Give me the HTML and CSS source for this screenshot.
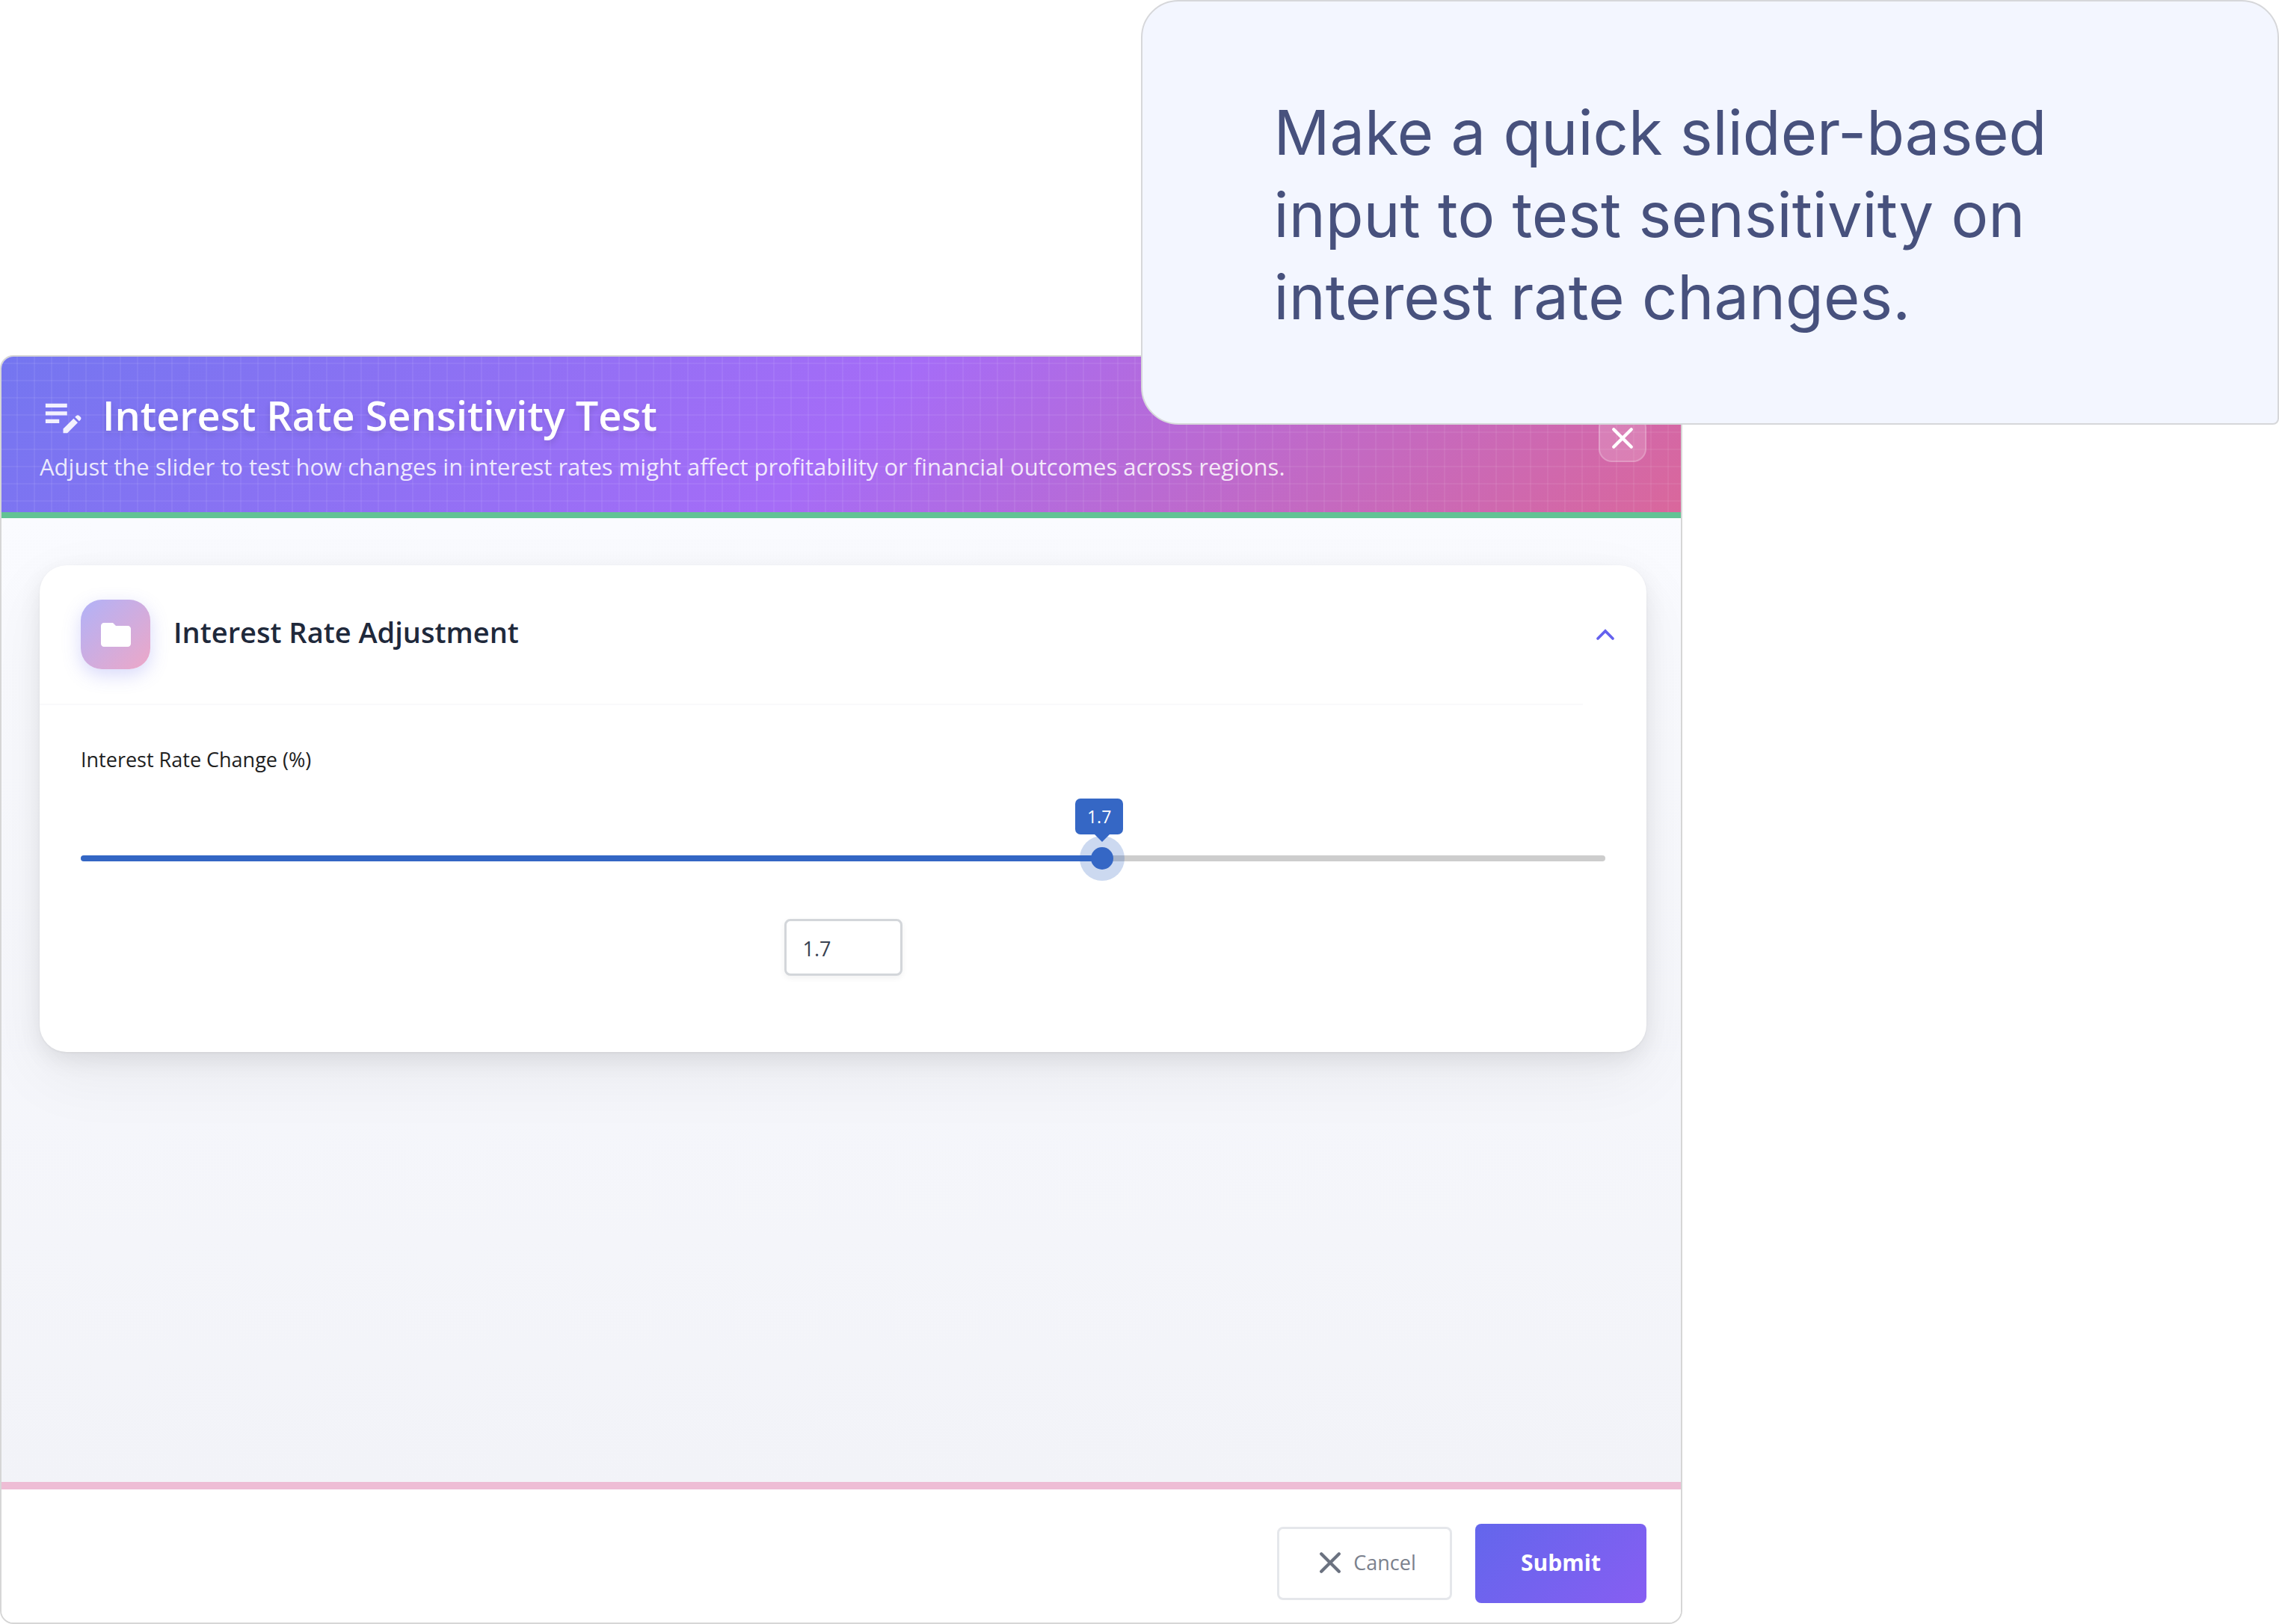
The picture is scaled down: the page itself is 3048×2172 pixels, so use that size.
FILE: index.html
```
<!DOCTYPE html>
<html lang="en">
<head>
    <meta charset="UTF-8">
    <meta name="viewport" content="width=device-width, initial-scale=1.0">
    <title>Interest Rate Sensitivity Test</title>
    <link rel="stylesheet" href="styles.css">
</head>
<body>

<aside class="prompt">
    <p>Make a quick slider-based<br>input to test sensitivity on<br>interest rate changes.</p>
</aside>

<form class="dialog">
    <header class="dialog-header">
        <div class="heading">
            <div class="title-row">
                <svg class="title-icon" viewBox="0 0 24 24" aria-hidden="true"><path d="M3 10h11v2H3v-2zm0-2h11V6H3v2zm0 8h7v-2H3v2zm15.01-3.13.71-.71c.39-.39 1.02-.39 1.41 0l.71.71c.39.39.39 1.02 0 1.41l-.71.71-2.12-2.12zm-.71.71-5.3 5.3V21h2.12l5.3-5.3-2.12-2.12z"/></svg>
                <h1>Interest Rate Sensitivity Test</h1>
            </div>
            <p class="subtitle">Adjust the slider to test how changes in interest rates might affect profitability or financial outcomes across regions.</p>
        </div>
        <button type="button" class="close-button" aria-label="Close">
            <svg viewBox="0 0 28 28"><path d="M3 3l22 22M25 3L3 25"/></svg>
        </button>
    </header>

    <main class="dialog-body">
        <section class="card">
            <div class="card-header">
                <div class="card-icon">
                    <svg viewBox="0 0 24 24" aria-hidden="true"><path d="M10 4H4c-1.1 0-1.99.9-1.99 2L2 18c0 1.1.9 2 2 2h16c1.1 0 2-.9 2-2V8c0-1.1-.9-2-2-2h-8l-2-2z"/></svg>
                </div>
                <h2>Interest Rate Adjustment</h2>
                <button type="button" class="collapse-button" aria-label="Collapse section">
                    <svg viewBox="0 0 24 16"><path d="M4 12l8-8 8 8"/></svg>
                </button>
            </div>
            <div class="card-content" id="card-content">
                <label for="rate">Interest Rate Change (%)</label>
                <div class="slider" id="slider" style="--fill: 67%">
                    <output class="bubble" id="bubble" for="rate">1.7</output>
                    <input type="range" id="rate" min="-5" max="5" step="0.1" value="1.7">
                </div>
                <input type="number" class="rate-value" id="rate-value" min="-5" max="5" step="0.1" value="1.7" aria-label="Interest rate change value">
            </div>
        </section>
    </main>

    <footer class="dialog-footer">
        <button type="button" class="cancel-button">
            <svg viewBox="0 0 28 28" aria-hidden="true"><path d="M3 3l22 22M25 3L3 25"/></svg>
            Cancel
        </button>
        <button type="submit" class="submit-button">Submit</button>
    </footer>
</form>

<script>
    const slider = document.getElementById('slider');
    const rate = document.getElementById('rate');
    const rateValue = document.getElementById('rate-value');
    const bubble = document.getElementById('bubble');

    function showRate() {
        const percent = (rate.value - rate.min) / (rate.max - rate.min) * 100;
        slider.style.setProperty('--fill', percent + '%');
        bubble.textContent = rate.value;
    }

    rate.addEventListener('input', () => {
        rateValue.value = rate.value;
        showRate();
    });

    rateValue.addEventListener('input', () => {
        rate.value = rateValue.value;
        showRate();
    });

    document.querySelector('.collapse-button').addEventListener('click', () => {
        const content = document.getElementById('card-content');
        content.hidden = !content.hidden;
    });
</script>

</body>
</html>
```
FILE: styles.css
```
* { box-sizing: border-box; }
body {
    margin: 0;
    min-height: 100vh;
    display: flex;
    flex-direction: column;
    background: white;
    font-family: "Open Sans", "Noto Sans", sans-serif;
}
h1, h2, p { margin: 0; }
h1, h2 { font-weight: 600; }
button, input { font-family: inherit; }
button { cursor: pointer; }
svg { display: block; flex: none; }

/* Prompt bubble, overlaps the dialog's top right corner */
.prompt {
    position: relative;
    z-index: 1;
    align-self: flex-end;
    width: 49.95%;
    padding: 120px 176px 114px;
    border: 2px solid #d6d7da;
    border-radius: 50px 50px 8px 50px;
    background: #f3f6ff;
    color: #47517d;
    font-family: Inter, sans-serif;
    font-size: 83px;
    line-height: 110px;
    white-space: nowrap;
}

.dialog {
    flex: 1;
    display: flex;
    flex-direction: column;
    width: 73.82%;
    margin-top: -93px;
    border: 2px solid #d6d6d6;
    border-radius: 18px;
    overflow: hidden;
}

.dialog-header {
    display: flex;
    align-items: center;
    justify-content: space-between;
    padding: 43px 46px 40px 51px;
    border-bottom: 8px solid #62c394;
    color: white;
    background:
        linear-gradient(rgba(255, 255, 255, 0.06) 2px, transparent 2px) 0 8px / 23px 23px,
        linear-gradient(90deg, rgba(255, 255, 255, 0.06) 2px, transparent 2px) -3px 0 / 23px 23px,
        linear-gradient(135deg, #7476f0, #a56cf7 50%, #da679b) border-box;
}
.heading { display: flex; flex-direction: column; gap: 13px; }
.title-row { display: flex; align-items: center; gap: 21px; }
.title-icon { width: 63px; height: 63px; fill: #f3f1fe; }
h1 {
    font-size: 54px;
    line-height: 70px;
    text-shadow: 0 4px 8px rgba(0, 0, 0, 0.12);
}
.subtitle { font-size: 31px; line-height: 42px; color: rgba(255, 255, 255, 0.85); }
.close-button {
    width: 64px;
    height: 64px;
    display: flex;
    align-items: center;
    justify-content: center;
    margin-top: 6px;
    padding: 0;
    border: 2px solid rgba(255, 255, 255, 0.2);
    border-radius: 18px;
    background: rgba(255, 255, 255, 0.16);
}
.close-button svg, .cancel-button svg {
    width: 30px;
    height: 30px;
    fill: none;
    stroke: currentColor;
    stroke-width: 4;
    stroke-linecap: round;
}
.close-button { color: white; }

.dialog-body {
    flex: 1;
    padding: 63px 46px 63px 51px;
    background: linear-gradient(#fafbff, #f2f3f8);
}
.card {
    border-radius: 36px;
    background: white;
    box-shadow: 0 30px 90px rgba(0, 0, 0, 0.06), 0 10px 30px rgba(0, 0, 0, 0.08), 0 1px 3px rgba(0, 0, 0, 0.06);
}
.card-header {
    display: flex;
    align-items: center;
    gap: 31px;
    height: 187px;
    padding: 0 40px 0 55px;
    border-bottom: 2px solid;
    border-image: linear-gradient(90deg, #f9f9fb 96%, transparent 96%) 1;
}
.card-icon {
    display: flex;
    align-items: center;
    justify-content: center;
    width: 93px;
    height: 93px;
    border-radius: 28px;
    background: linear-gradient(135deg, #b1b2f8, #eda7c7);
    box-shadow: 0 8px 24px rgba(99, 102, 241, 0.25);
}
.card-icon svg { width: 48px; height: 48px; fill: white; }
h2 {
    flex: 1;
    padding-bottom: 8px;
    font-size: 38px;
    line-height: 50px;
    color: #1f293b;
}
.collapse-button { padding: 0; border: none; background: none; color: #6461ee; }
.collapse-button svg {
    width: 30px;
    height: 20px;
    fill: none;
    stroke: currentColor;
    stroke-width: 3;
    stroke-linecap: round;
}
.card-content { padding: 53px 55px 102px; }
label { display: block; font-size: 27px; line-height: 40px; color: #212121; }

.slider { position: relative; margin-top: 82px; }
.slider::before {
    content: "";
    position: absolute;
    bottom: 26px;
    width: 100%;
    height: 8px;
    border-radius: 4px;
    background: linear-gradient(90deg, #3366c4 var(--fill), #cdcdcd var(--fill));
}
/* The input is half a thumb wider on each side, so the thumb's centre follows the bar */
.slider input {
    -webkit-appearance: none;
    appearance: none;
    position: relative;
    display: block;
    width: calc(100% + 30px);
    height: 60px;
    margin: 0 -15px;
    background: none;
}
.slider input::-webkit-slider-thumb {
    -webkit-appearance: none;
    width: 30px;
    height: 30px;
    border-radius: 50%;
    background: #3567c5;
    box-shadow: 0 0 0 15px rgba(53, 103, 197, 0.25);
}
.bubble {
    position: absolute;
    z-index: 1;
    left: var(--fill);
    bottom: 62px;
    width: 64px;
    margin-left: -36px;
    border-radius: 7px;
    background: #3567c5;
    color: white;
    font-size: 23px;
    line-height: 48px;
    text-align: center;
}
.bubble::after {
    content: "";
    position: absolute;
    top: 100%;
    left: 26px;
    border: 10px solid transparent;
    border-top-color: #3567c5;
    border-bottom: none;
}
.rate-value {
    display: block;
    width: 158px;
    height: 76px;
    margin: 51px auto 0;
    padding: 2px 22px 0;
    border: 3px solid #d3d6da;
    border-radius: 8px;
    background: white;
    box-shadow: 0 3px 8px rgba(0, 0, 0, 0.06);
    color: #374151;
    font-size: 27px;
    appearance: textfield;
}
.rate-value::-webkit-inner-spin-button { display: none; }

.dialog-footer {
    display: flex;
    align-items: center;
    justify-content: flex-end;
    gap: 31px;
    padding: 46px 46px 26px;
    border-top: 10px solid #eebdd5;
    background: white;
}
.dialog-footer button {
    display: flex;
    align-items: center;
    justify-content: center;
    padding-bottom: 4px;
    border-radius: 8px;
}
.cancel-button {
    gap: 16px;
    width: 234px;
    height: 98px;
    padding-left: 14px;
    border: 3px solid #e5e7eb;
    background: white;
    color: #7b818d;
    font-size: 27px;
}
.cancel-button svg { color: #6b7280; }
.submit-button {
    width: 229px;
    height: 106px;
    border: none;
    background: linear-gradient(135deg, #6366ec, #875ef2);
    color: white;
    font-size: 30px;
    font-weight: 700;
}
```
